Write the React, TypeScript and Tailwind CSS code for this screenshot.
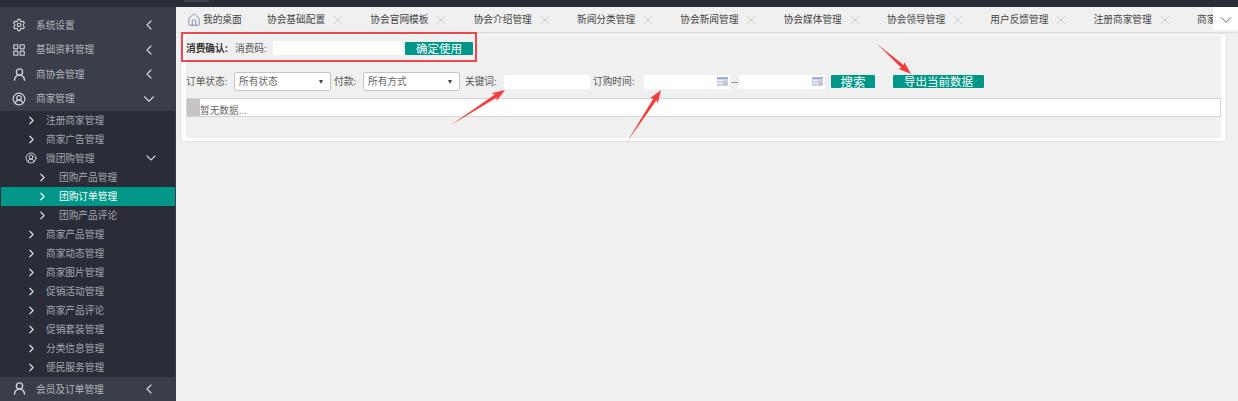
import { ChevronDown, ChevronLeft, ChevronRight, House, LayoutGrid, Settings, UserRound, CircleUserRound, X } from 'lucide-react';
import type { ReactNode } from 'react';

const tabs = ['协会基础配置', '协会官网模板', '协会介绍管理', '新闻分类管理', '协会新闻管理', '协会媒体管理', '协会领导管理', '用户反馈管理', '注册商家管理', '商家广告管理'];

const font = { fontFamily: '"Noto Sans CJK SC", "Liberation Sans", sans-serif' };

function TopItem({ icon, label, open }: { icon: ReactNode; label: string; open?: boolean }) {
  return (
    <div className="flex h-[24.5px] items-center pl-[12px] text-[9.7px] text-[#b4b6bc]">
      <span className="mr-[10px] flex w-[14px] shrink-0 justify-center text-[#d0d2d6]">{icon}</span>
      <span className="flex-1">{label}</span>
      {open ? (
        <ChevronDown className="mr-[17px] h-[18px] w-[18px] text-[#d0d2d6]" strokeWidth={1.5} />
      ) : (
        <ChevronLeft className="mr-[18px] h-[16px] w-[16px] text-[#d0d2d6]" strokeWidth={1.8} />
      )}
    </div>
  );
}

function SubItem({ label, deep, active }: { label: string; deep?: boolean; active?: boolean }) {
  return (
    <div
      className={`flex h-[19px] items-center text-[9.7px] ${deep ? 'pl-[36px]' : 'pl-[25px]'} ${
        active ? 'ml-px bg-[#009688] text-white' : 'text-[#a4a7ae]'
      }`}
    >
      <ChevronRight className={`h-[13px] w-[13px] shrink-0 text-[#d8dadd] ${active ? '-ml-px text-white' : ''}`} strokeWidth={2.2} />
      <span className={deep ? 'ml-[10px]' : 'ml-[8px]'}>{label}</span>
    </div>
  );
}

function Sidebar() {
  return (
    <aside className="flex h-[394px] w-[176px] shrink-0 flex-col overflow-hidden border-r border-[#3a3e4a] bg-[#2a2d38]">
      <div className="bg-[#3a3e4a] pt-[6px]">
        <TopItem icon={<Settings className="h-[14px] w-[14px]" strokeWidth={2} />} label="系统设置" />
        <TopItem icon={<LayoutGrid className="h-[14px] w-[14px]" strokeWidth={2} />} label="基础资料管理" />
        <TopItem icon={<UserRound className="h-[15px] w-[15px] shrink-0" strokeWidth={2.2} />} label="商协会管理" />
        <TopItem icon={<CircleUserRound className="h-[14px] w-[14px]" strokeWidth={2} />} label="商家管理" open />
      </div>
      <SubItem label="注册商家管理" />
      <SubItem label="商家广告管理" />
      <div className="flex h-[19px] items-center pl-[25px] text-[9.7px] text-[#a4a7ae]">
        <CircleUserRound className="h-[12px] w-[12px] shrink-0 text-[#d0d2d6]" strokeWidth={2} />
        <span className="ml-[9px] flex-1">微团购管理</span>
        <ChevronDown className="mr-[16px] h-[16px] w-[16px] text-[#d0d2d6]" strokeWidth={1.6} />
      </div>
      <SubItem label="团购产品管理" deep />
      <SubItem label="团购订单管理" deep active />
      <SubItem label="团购产品评论" deep />
      <SubItem label="商家产品管理" />
      <SubItem label="商家动态管理" />
      <SubItem label="商家图片管理" />
      <SubItem label="促销活动管理" />
      <SubItem label="商家产品评论" />
      <SubItem label="促销套装管理" />
      <SubItem label="分类信息管理" />
      <SubItem label="便民服务管理" />
      <div className="bg-[#3a3e4a]">
        <TopItem icon={<UserRound className="h-[15px] w-[15px] shrink-0" strokeWidth={2.2} />} label="会员及订单管理" />
      </div>
    </aside>
  );
}

function TabBar() {
  return (
    <div className="relative flex h-[26px] overflow-hidden border-b border-[#dedede] text-[9.7px] text-[#444]">
      <div className="flex w-[78px] shrink-0 items-center pl-[11px]">
        <House className="h-[14px] w-[14px] text-[#5b6f8c]" strokeWidth={1.2} />
        <span className="ml-[2px]">我的桌面</span>
      </div>
      {tabs.map((t) => (
        <div key={t} className="flex w-[103.33px] shrink-0 items-center pl-[13px]">
          <span className="w-[63px] shrink-0">{t}</span>
          <X className="h-[16px] w-[16px] text-[#c8c8c8]" strokeWidth={1.3} />
        </div>
      ))}
      <div className="absolute top-0 right-0 flex h-[23px] w-[25px] items-center justify-center bg-white pt-[3px]">
        <ChevronDown className="h-[18px] w-[18px] text-[#333]" strokeWidth={1} />
      </div>
    </div>
  );
}

function SelectBox({ label }: { label: string }) {
  return (
    <div className="flex h-[19px] w-[97px] items-center justify-between rounded-[2px] border border-[#c4c4c4] bg-white pr-[7px] pl-[4px] text-[9.7px] text-[#666]">
      <span>{label}</span>
      <span className="h-0 w-0 border-x-[2.5px] border-t-[4px] border-x-transparent border-t-[#444]" />
    </div>
  );
}

function DateBox({ w }: { w: string }) {
  return (
    <div className={`flex h-[14px] items-center justify-end bg-white pr-[2px] ${w}`}>
      <svg width="11" height="9" viewBox="0 0 11 9">
        <rect width="11" height="9" fill="#c6d2e6" />
        <rect width="11" height="2" fill="#9fb2d3" />
        <rect x="7" y="5" width="3" height="3" fill="#e3b4b4" />
        <rect x="1" y="3" width="5" height="1" fill="#eef2f8" />
        <rect x="1" y="6" width="5" height="1" fill="#eef2f8" />
      </svg>
    </div>
  );
}

function ConfirmRow() {
  return (
    <div className="flex h-[14px] items-center text-[9.7px] text-[#555]">
      <span className="w-[49px] font-bold text-[#333]">消费确认:</span>
      <span className="w-[38px]">消费码:</span>
      <div className="h-[14px] w-[130px] bg-white" />
      <button className="ml-[2px] h-[13px] w-[68px] rounded-[1px] bg-[#009688] text-[11.5px] leading-[13px] text-white">确定使用</button>
    </div>
  );
}

function FilterRow() {
  return (
    <div className="flex h-[19px] items-center text-[9.7px] text-[#555]">
      <span className="w-[48px]">订单状态:</span>
      <SelectBox label="所有状态" />
      <span className="ml-[3px] w-[29px]">付款:</span>
      <SelectBox label="所有方式" />
      <span className="ml-[5px] w-[39px]">关键词:</span>
      <div className="h-[14px] w-[86px] bg-white" />
      <span className="ml-[3px] w-[51px]">订购时间:</span>
      <DateBox w="w-[86px]" />
      <span className="w-[9px] text-center">--</span>
      <DateBox w="w-[86px]" />
      <button className="ml-[6px] h-[13px] w-[44px] rounded-[1px] bg-[#009688] text-[12.5px] leading-[13px] text-white">搜索</button>
      <button className="ml-[18px] h-[13px] w-[91px] rounded-[1px] bg-[#009688] text-[11.5px] leading-[13px] text-white">导出当前数据</button>
    </div>
  );
}

function Arrow({ from, to }: { from: [number, number]; to: [number, number] }) {
  const dx = to[0] - from[0];
  const dy = to[1] - from[1];
  const len = Math.hypot(dx, dy);
  const ux = dx / len;
  const uy = dy / len;
  const nx = -uy;
  const ny = ux;
  const at = (along: number, side: number) => `${to[0] - ux * along + nx * side},${to[1] - uy * along + ny * side}`;
  const points = [`${from[0]},${from[1]}`, at(11, 1.8), at(13, 4.6), `${to[0]},${to[1]}`, at(13, -4.6), at(11, -1.8)].join(' ');
  return <polygon points={points} fill="#f73b3b" />;
}

export default function App() {
  return (
    <div className="relative h-[401px] w-[1238px] overflow-hidden bg-[#f0f0f1]" style={font}>
      <div className="h-[7px] bg-[#2a2d38] pl-[184px]">
        <div className="h-[2px] w-[25px] bg-[#3f434e]" />
      </div>
      <div className="flex">
        <Sidebar />
        <main className="min-w-0 flex-1">
          <TabBar />
          <div className="ml-[4px] mr-[11px] rounded-[3px] border border-[#e2e2e2] bg-white px-[5px] pt-px pb-[3px]">
            <div className="h-[103px] bg-[#f0f0f0] pt-[6px]">
              <ConfirmRow />
              <div className="mt-[17px]">
                <FilterRow />
              </div>
              <div className="relative mt-[7px] h-[19px] border border-[#d4d4d4] bg-white">
                <div className="flex h-full">
                  <span className="h-full w-[13px] bg-[#c8c4c4]" />
                  <span className="self-end text-[9.7px] leading-[11px] text-[#666]">暂无数据...</span>
                </div>
              </div>
            </div>
          </div>
        </main>
      </div>
      {/* annotations drawn on top of the screenshot */}
      <div className="absolute top-[32px] left-[181px] h-[30px] w-[296px] border-2 border-[#f0474c]" />
      <svg className="absolute top-0 left-0" width="1238" height="401">
        <Arrow from={[451, 125]} to={[505, 90]} />
        <Arrow from={[627, 142]} to={[661, 90]} />
        <Arrow from={[877, 44]} to={[911, 74]} />
      </svg>
    </div>
  );
}
